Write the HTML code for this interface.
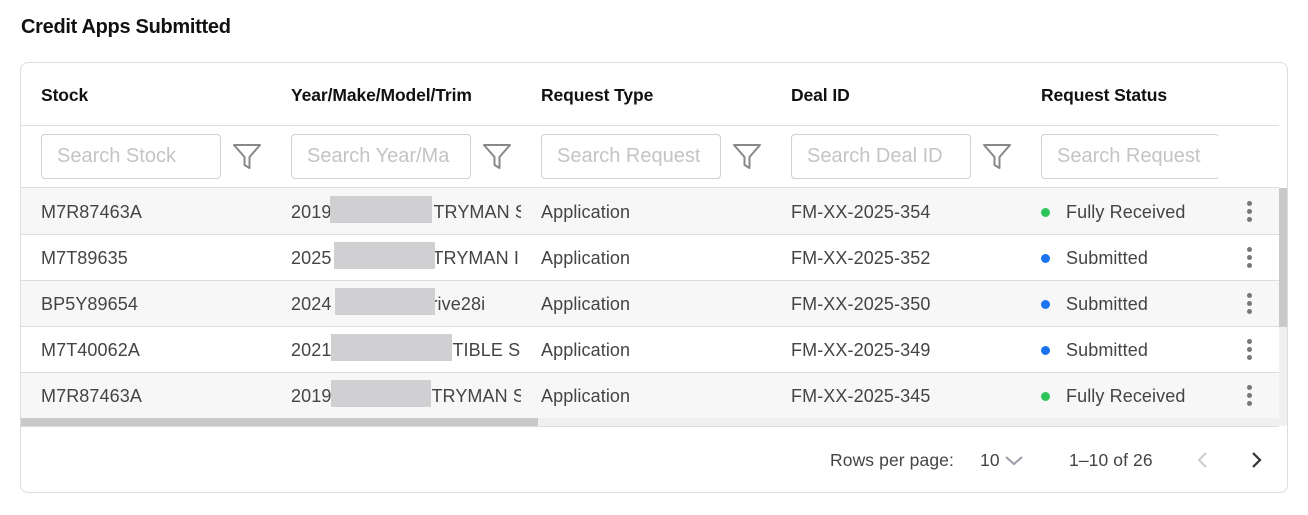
<!DOCTYPE html>
<html><head><style>
*{margin:0;padding:0;box-sizing:border-box}
body{width:1308px;height:515px;background:#fff;font-family:"Liberation Sans",sans-serif;position:relative;overflow:hidden;color:#333}
.a{position:absolute;white-space:nowrap}
h1{position:absolute;left:21px;top:16px;font-size:20px;font-weight:bold;color:#111;letter-spacing:-0.3px}
.card{position:absolute;left:20px;top:62px;width:1268px;height:431px;border:1px solid #dcdce4;border-radius:8px;overflow:hidden}
.th{font-size:17.5px;font-weight:bold;color:#111;top:85px;letter-spacing:-0.1px}
.inp{position:absolute;top:134px;width:180px;height:45px;border:1px solid #cfcfd6;border-radius:4px;color:#c4c4c4;font-size:20px;padding:10px 0 0 15px;overflow:hidden;white-space:nowrap;background:#fff}
.hl{position:absolute;left:21px;width:1258px;height:1px;background:#dcdce4}
.row{position:absolute;left:21px;width:1258px;height:46px}
.c{font-size:18px;color:#444;letter-spacing:0.1px}
.red{position:absolute;height:27px;background:#d0d0d2}
.dot{position:absolute;width:9px;height:9px;border-radius:50%}
.keb{position:absolute;left:1247px;width:4px}
.keb i{display:block;width:5px;height:5px;border-radius:50%;background:#777;margin-bottom:3px}
.f{font-size:17.5px;top:450px}
</style></head><body>
<h1>Credit Apps Submitted</h1>
<div class="card"></div>
<div class="a th" style="left:41px">Stock</div>
<div class="a th" style="left:291px">Year/Make/Model/Trim</div>
<div class="a th" style="left:541px">Request Type</div>
<div class="a th" style="left:791px">Deal ID</div>
<div class="a th" style="left:1041px">Request Status</div>
<div class="hl" style="top:125px"></div>
<div class="inp" style="left:41px">Search Stock</div>
<div class="inp" style="left:291px">Search Year/Ma</div>
<div class="inp" style="left:541px">Search Request</div>
<div class="inp" style="left:791px">Search Deal ID</div>
<div class="inp" style="left:1041px;width:178px;border-right:none">Search Request</div>
<svg class="a" style="left:232px;top:143px" width="30" height="28" viewBox="0 0 30 28"><path d="M2 2H28L17.5 14V25L12.5 22V14Z" fill="none" stroke="#888" stroke-width="2" stroke-linejoin="round"/></svg>
<svg class="a" style="left:482px;top:143px" width="30" height="28" viewBox="0 0 30 28"><path d="M2 2H28L17.5 14V25L12.5 22V14Z" fill="none" stroke="#888" stroke-width="2" stroke-linejoin="round"/></svg>
<svg class="a" style="left:732px;top:143px" width="30" height="28" viewBox="0 0 30 28"><path d="M2 2H28L17.5 14V25L12.5 22V14Z" fill="none" stroke="#888" stroke-width="2" stroke-linejoin="round"/></svg>
<svg class="a" style="left:982px;top:143px" width="30" height="28" viewBox="0 0 30 28"><path d="M2 2H28L17.5 14V25L12.5 22V14Z" fill="none" stroke="#888" stroke-width="2" stroke-linejoin="round"/></svg>
<div class="hl" style="top:187px"></div>

<div class="row" style="top:188px;background:#f7f7f7"></div>
<div class="row" style="top:234px;background:#fff;border-top:1px solid #dcdce4"></div>
<div class="row" style="top:280px;background:#f7f7f7;border-top:1px solid #dcdce4"></div>
<div class="row" style="top:326px;background:#fff;border-top:1px solid #dcdce4"></div>
<div class="row" style="top:372px;background:#f7f7f7;border-top:1px solid #dcdce4"></div>

<div class="a c" style="left:41px;top:202px">M7R87463A</div>
<div class="a c" style="left:41px;top:248px">M7T89635</div>
<div class="a c" style="left:41px;top:294px">BP5Y89654</div>
<div class="a c" style="left:41px;top:340px">M7T40062A</div>
<div class="a c" style="left:41px;top:386px">M7R87463A</div>

<div class="a c" style="left:291px;top:202px;width:230px;overflow:hidden">2019<span style="display:inline-block;width:102px"></span>TRYMAN S</div>
<div class="a c" style="left:291px;top:248px;width:230px;overflow:hidden">2025<span style="display:inline-block;width:101px"></span>TRYMAN I</div>
<div class="a c" style="left:291px;top:294px;width:230px;overflow:hidden">2024<span style="display:inline-block;width:100px"></span>rive28i</div>
<div class="a c" style="left:291px;top:340px;width:230px;overflow:hidden">2021<span style="display:inline-block;width:121px"></span>TIBLE SI</div>
<div class="a c" style="left:291px;top:386px;width:230px;overflow:hidden">2019<span style="display:inline-block;width:100px"></span>TRYMAN S</div>
<div class="red" style="left:330px;top:196px;width:102px"></div>
<div class="red" style="left:334px;top:242px;width:101px"></div>
<div class="red" style="left:335px;top:288px;width:100px"></div>
<div class="red" style="left:331px;top:334px;width:121px"></div>
<div class="red" style="left:331px;top:380px;width:100px"></div>

<div class="a c" style="left:541px;top:202px">Application</div>
<div class="a c" style="left:541px;top:248px">Application</div>
<div class="a c" style="left:541px;top:294px">Application</div>
<div class="a c" style="left:541px;top:340px">Application</div>
<div class="a c" style="left:541px;top:386px">Application</div>

<div class="a c" style="left:791px;top:202px">FM-XX-2025-354</div>
<div class="a c" style="left:791px;top:248px">FM-XX-2025-352</div>
<div class="a c" style="left:791px;top:294px">FM-XX-2025-350</div>
<div class="a c" style="left:791px;top:340px">FM-XX-2025-349</div>
<div class="a c" style="left:791px;top:386px">FM-XX-2025-345</div>

<div class="dot" style="left:1041px;top:208px;background:#2ec55a"></div>
<div class="dot" style="left:1041px;top:254px;background:#1a73f0"></div>
<div class="dot" style="left:1041px;top:300px;background:#1a73f0"></div>
<div class="dot" style="left:1041px;top:346px;background:#1a73f0"></div>
<div class="dot" style="left:1041px;top:392px;background:#2ec55a"></div>
<div class="a c" style="left:1066px;top:202px">Fully Received</div>
<div class="a c" style="left:1066px;top:248px">Submitted</div>
<div class="a c" style="left:1066px;top:294px">Submitted</div>
<div class="a c" style="left:1066px;top:340px">Submitted</div>
<div class="a c" style="left:1066px;top:386px">Fully Received</div>

<div class="keb" style="top:201px"><i></i><i></i><i></i></div>
<div class="keb" style="top:247px"><i></i><i></i><i></i></div>
<div class="keb" style="top:293px"><i></i><i></i><i></i></div>
<div class="keb" style="top:339px"><i></i><i></i><i></i></div>
<div class="keb" style="top:385px"><i></i><i></i><i></i></div>

<div class="a" style="left:1279px;top:188px;width:8px;height:238px;background:#f0f0f0"></div>
<div class="a" style="left:1279px;top:188px;width:8px;height:139px;background:#c9c9c9"></div>
<div class="a" style="left:21px;top:418px;width:1258px;height:8px;background:#f0f0f0"></div>
<div class="a" style="left:21px;top:418px;width:517px;height:8px;background:#c9c9c9"></div>
<div class="hl" style="top:426px"></div>

<div class="a c f" style="left:830px">Rows per page:</div>
<div class="a c f" style="left:980px">10</div>
<svg class="a" style="left:1004px;top:455px" width="20" height="12" viewBox="0 0 20 12"><path d="M2 2L10 9L18 2" fill="none" stroke="#9a9aaa" stroke-width="2"/></svg>
<div class="a c f" style="left:1069px">1–10 of 26</div>
<svg class="a" style="left:1196px;top:451px" width="14" height="18" viewBox="0 0 14 18"><path d="M10 2L3 9L10 16" fill="none" stroke="#ccc" stroke-width="2"/></svg>
<svg class="a" style="left:1250px;top:451px" width="14" height="18" viewBox="0 0 14 18"><path d="M3 2L10 9L3 16" fill="none" stroke="#333" stroke-width="2.2"/></svg>
</body></html>
